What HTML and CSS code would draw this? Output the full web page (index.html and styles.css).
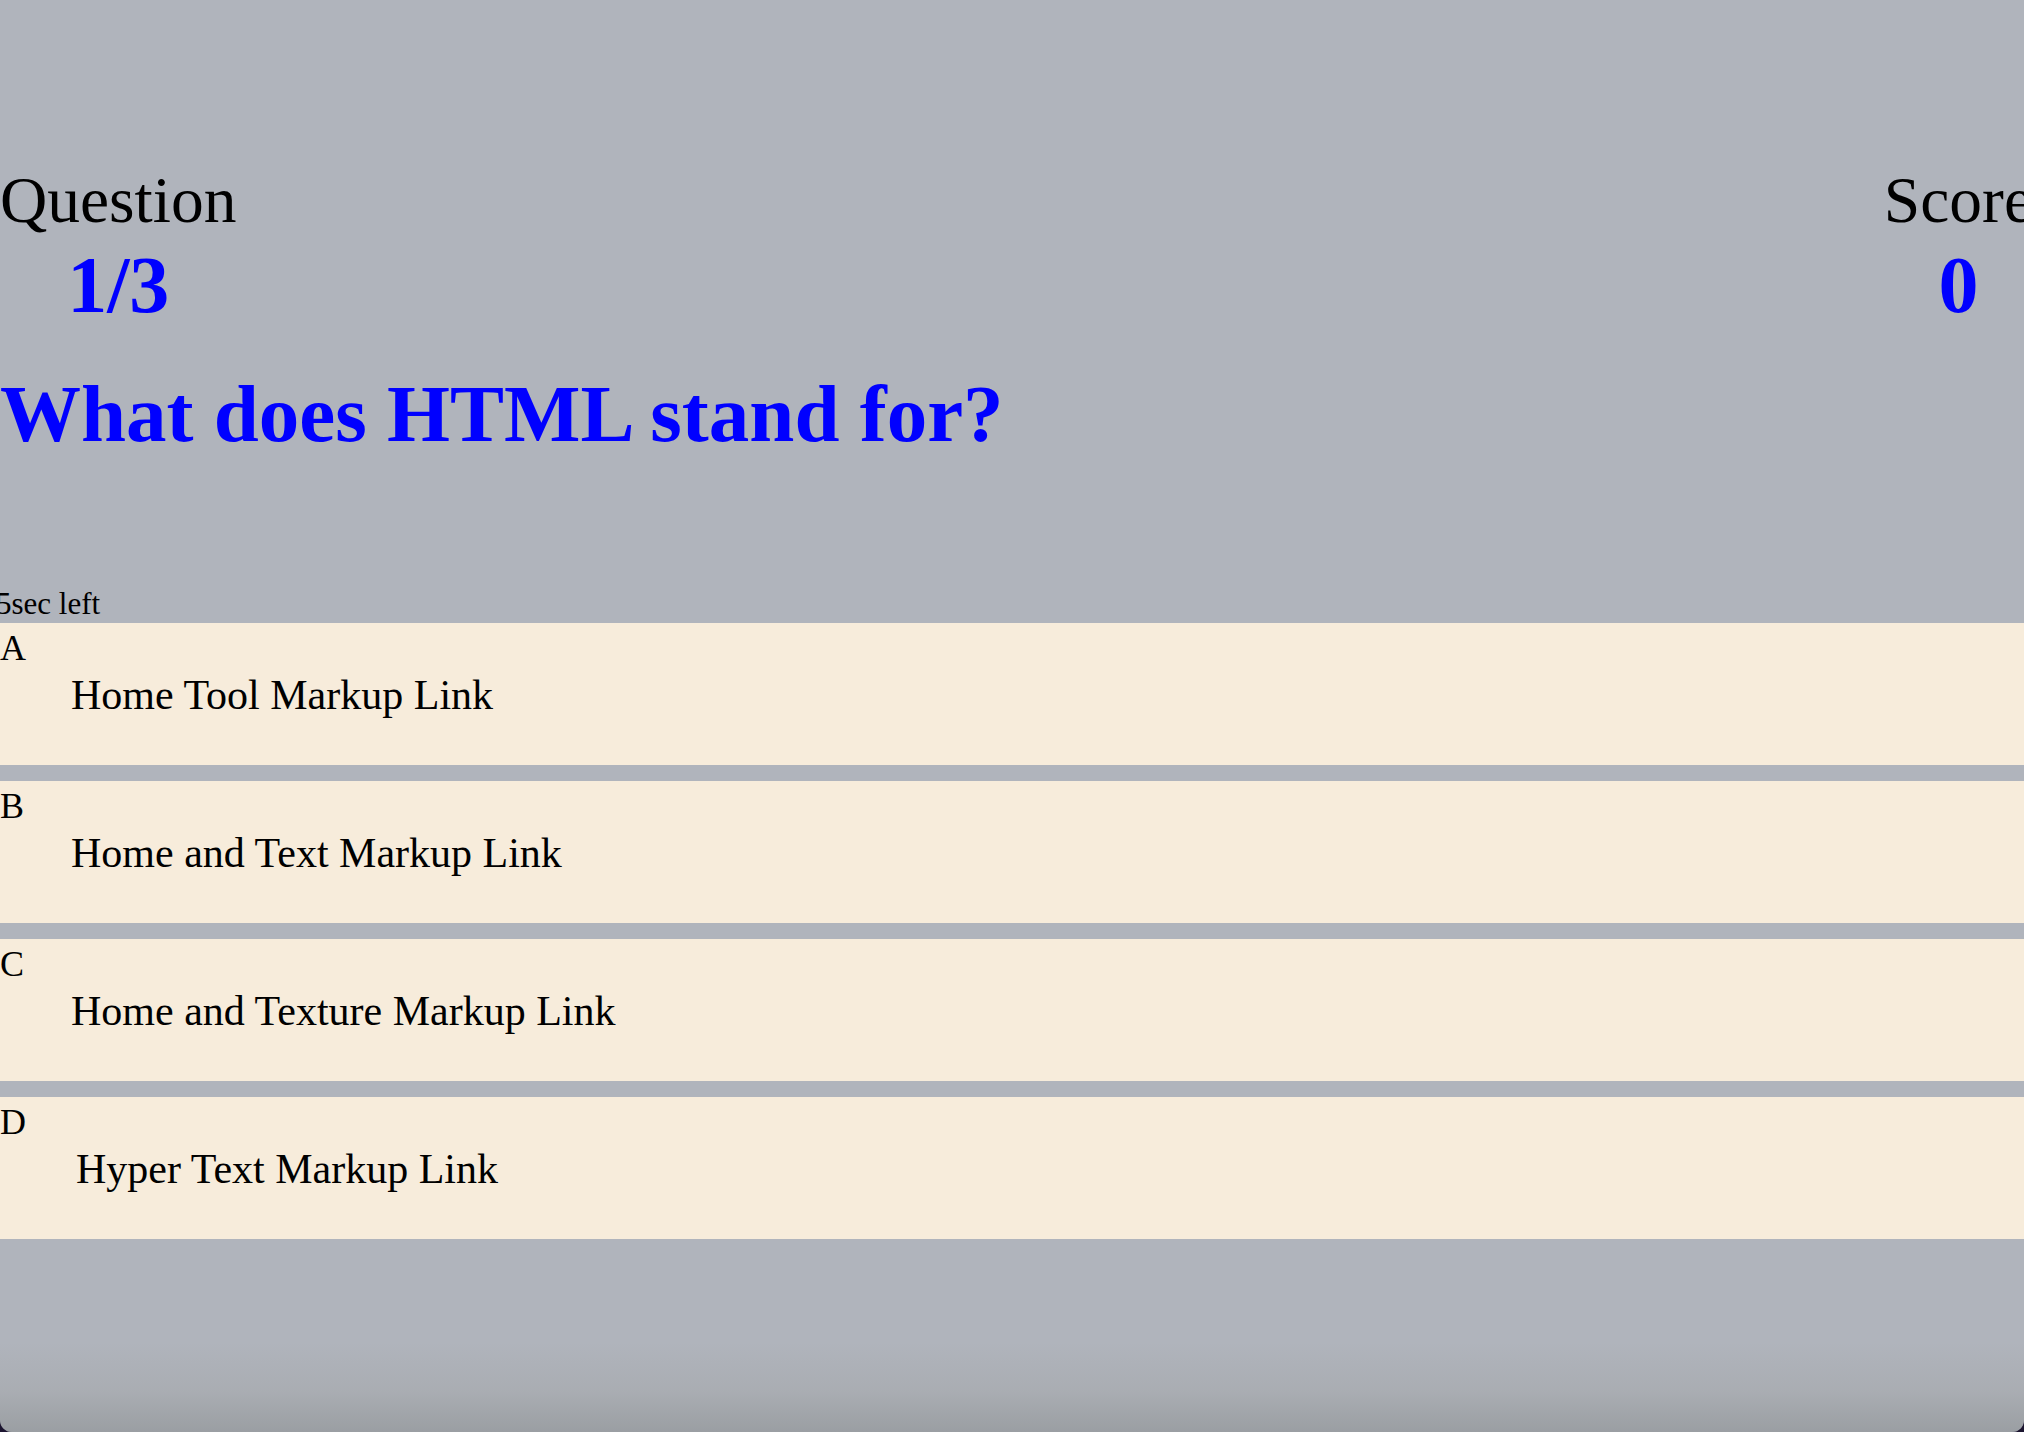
FILE: index.html
```html
<!DOCTYPE html>
<html lang="en">
<head>
<meta charset="utf-8">
<title>Quiz</title>
<link rel="stylesheet" href="styles.css">
</head>
<body>
<div class="app">
  <header class="stats">
    <div class="stat">
      <div class="stat-label">Question</div>
      <div class="stat-value">1/3</div>
    </div>
    <div class="stat">
      <div class="stat-label">Score</div>
      <div class="stat-value">0</div>
    </div>
  </header>
  <h1 class="question">What does HTML stand for?</h1>
  <div class="timer">5sec left</div>
  <ul class="choices">
    <li class="choice">
      <div class="choice-prefix">A</div>
      <div class="choice-text">Home Tool Markup Link</div>
    </li>
    <li class="choice">
      <div class="choice-prefix">B</div>
      <div class="choice-text">Home and Text Markup Link</div>
    </li>
    <li class="choice">
      <div class="choice-prefix">C</div>
      <div class="choice-text">Home and Texture Markup Link</div>
    </li>
    <li class="choice">
      <div class="choice-prefix">D</div>
      <div class="choice-text choice-text-shift">Hyper Text Markup Link</div>
    </li>
  </ul>
  <div class="shade"></div>
</div>
</body>
</html>
```
FILE: styles.css
```css
html, body {
  margin: 0;
  padding: 0;
  background: #1c1530;
}

body {
  font-family: "Liberation Serif", "Times New Roman", serif;
  color: #000;
}

.app {
  position: relative;
  height: 100vh;
  overflow: hidden;
  background: #b0b4bc;
  border-bottom-left-radius: 12px;
  border-bottom-right-radius: 12px;
}

.stats {
  display: flex;
  justify-content: space-between;
  align-items: flex-start;
  width: calc(100% + 9px);
  padding-top: 168px;
}

.stat {
  display: flex;
  flex-direction: column;
  align-items: center;
}

.stat-label {
  font-size: 65.5px;
  line-height: 65px;
}

.stat-value {
  margin-top: 13px;
  font-size: 80px;
  line-height: 78px;
  font-weight: bold;
  color: #0000ff;
}

.question {
  margin: 50px 0 0 0;
  font-size: 81px;
  line-height: 80px;
  font-weight: bold;
  color: #0000ff;
}

.timer {
  margin-top: 133px;
  margin-left: -4px;
  font-size: 31px;
  line-height: 34px;
}

.choices {
  list-style: none;
  margin: 2px 0 0 0;
  padding: 0;
}

.choice {
  box-sizing: border-box;
  height: 142px;
  margin-bottom: 16px;
  padding-top: 7px;
  background: #f7ecdb;
}

.choice-prefix {
  font-size: 36px;
  line-height: 36px;
}

.choice-text {
  margin-top: 9px;
  padding-left: 71px;
  font-size: 42px;
  line-height: 40px;
}

.choice-text-shift {
  padding-left: 76px;
}

.shade {
  position: absolute;
  left: 0;
  right: 0;
  bottom: 0;
  height: 90px;
  background: linear-gradient(to bottom, rgba(150, 152, 150, 0) 0%, rgba(150, 152, 150, 0.25) 55%, rgba(140, 144, 146, 0.6) 100%);
  pointer-events: none;
}
```
